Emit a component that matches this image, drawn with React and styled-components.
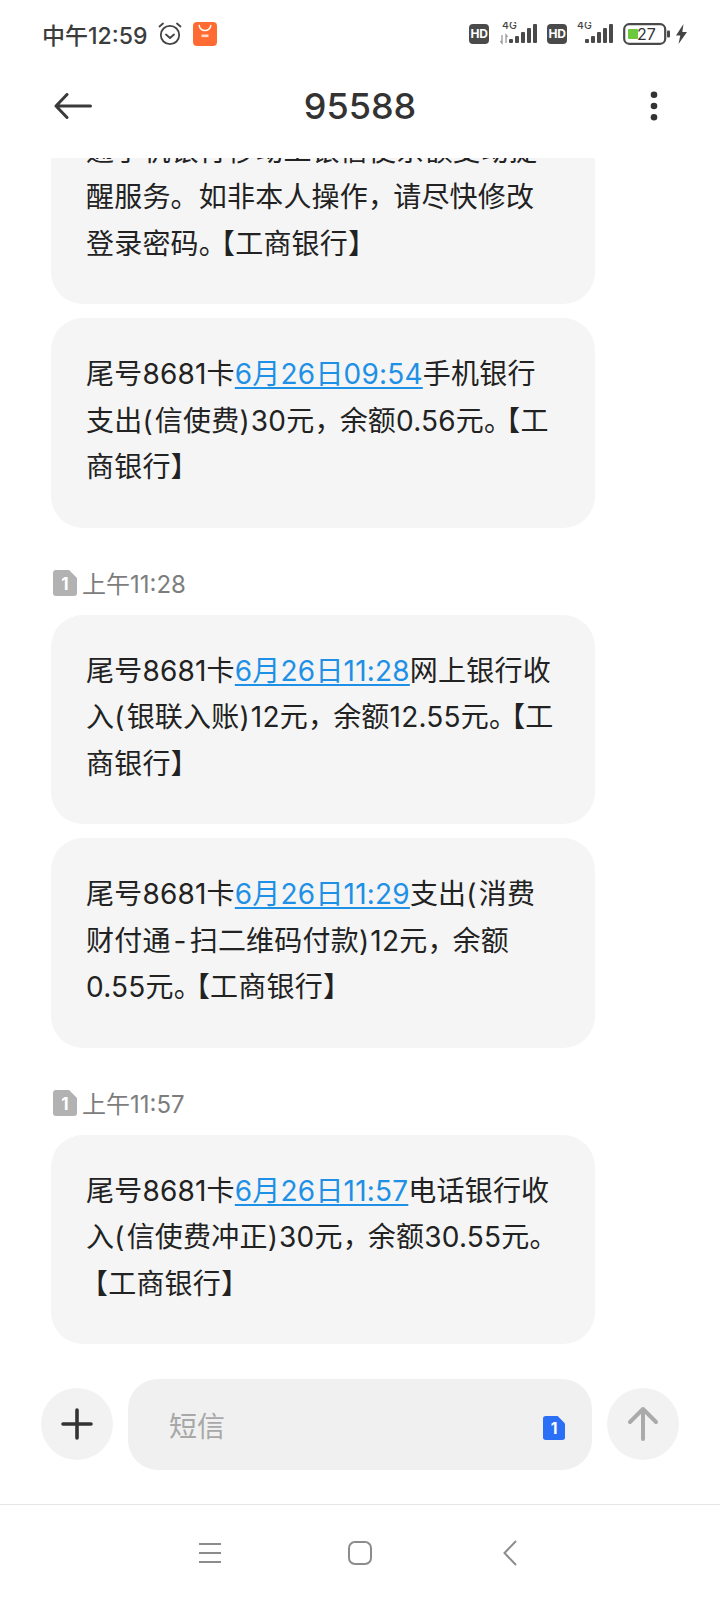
import React from 'react';
import styled, { createGlobalStyle } from 'styled-components';

const Global = createGlobalStyle`
  html, body { margin: 0; padding: 0; background: #fff; }
  * { box-sizing: border-box; }
`

const FONT = 'Inter, "Noto Sans CJK SC", "Noto Sans", sans-serif'

const Screen = styled.div`
  width: 720px;
  height: 1600px;
  display: flex;
  flex-direction: column;
  background: #fff;
  font-family: ${FONT};
  overflow: hidden;
`

const StatusBar = styled.div`
  height: 70px;
  flex: none;
  display: flex;
  align-items: center;
  justify-content: space-between;
  padding: 0 32px 2px 42px;
`

const StatusGroup = styled.div`
  display: flex;
  align-items: center;
  gap: ${p => p.$gap || 0}px;
`

const Clock = styled.span`
  font-size: 23px;
  font-weight: 500;
  color: #3c3c3c;
`

const HdBadge = styled.span`
  width: 20px;
  height: 20px;
  border-radius: 4px;
  background: #4a4a4a;
  color: #fff;
  font-size: 12px;
  font-weight: 700;
  line-height: 20px;
  text-align: center;
  letter-spacing: -0.3px;
`

const BoltSlot = styled.span`
  margin-left: -5px;
  line-height: 0;
`

const Header = styled.div`
  height: 88px;
  flex: none;
  display: grid;
  grid-template-columns: 1fr auto 1fr;
  align-items: center;
  padding: 0 54px 16px;
`

const Title = styled.div`
  font-size: 36px;
  font-weight: 500;
  color: #333;
`

const HeaderEnd = styled.div`
  justify-self: end;
  line-height: 0;
  margin-right: 8px;
`

const HeaderStart = styled.div`
  justify-self: start;
  line-height: 0;
`

const List = styled.div`
  flex: 1;
  min-height: 0;
  display: flex;
  flex-direction: column;
  justify-content: flex-end;
  overflow: hidden;
  padding: 0 0 35px 51px;
`

const Bubble = styled.div`
  flex: none;
  width: 544px;
  background: #f5f5f5;
  border-radius: 32px;
  padding: 33px 35px 37px;
  font-size: 28px;
  line-height: 46.5px;
  letter-spacing: 0.2px;
  color: #222;
  margin-top: 14px;
`

const DateLink = styled.a`
  color: #1e90e6;
  text-decoration: underline;
  text-underline-offset: 3px;
`

// punctuation in the phone's font sits wider or tighter than in ours
const Punct = styled.span`
  margin: ${p => p.$margin};
`

const Stamp = styled.div`
  flex: none;
  display: flex;
  align-items: center;
  gap: 5px;
  height: 30px;
  margin: 40px 0 3px 2px;
  font-size: 24px;
  color: #7d7d7d;
`

const Composer = styled.div`
  flex: none;
  height: 125px;
  display: flex;
  align-items: flex-start;
  padding: 0 41px;
`

const RoundButton = styled.div`
  width: 72px;
  height: 72px;
  margin-top: 9px;
  flex: none;
  border-radius: 50%;
  background: #f2f2f2;
  display: flex;
  align-items: center;
  justify-content: center;
`

const InputBox = styled.div`
  position: relative;
  width: 464px;
  height: 91px;
  margin: 0 15px;
  flex: none;
  border-radius: 30px;
  background: #f0f0f0;
  padding: 0 0 0 41px;
  display: flex;
  align-items: center;
  font-size: 28px;
  color: #a8a8a8;
`

const SimBadge = styled.span`
  position: absolute;
  right: 27px;
  top: 37px;
  line-height: 0;
`

const NavBar = styled.div`
  flex: none;
  height: 96px;
  border-top: 1px solid #e6e6e6;
  display: grid;
  grid-template-columns: repeat(3, 150px);
  justify-content: center;
  justify-items: center;
  align-items: center;
`

const PUNCT_MARGINS = {
  '(': '0 2px 0 0',
  ')': '0 1px 0 0',
  '-': '0 3px',
  '，': '0 -3px 0 0',
  '【': '0 0 0 -6px',
};

function Rich({ text }) {
  return text.split(/([()\-，【])/).map((part, i) =>
    PUNCT_MARGINS[part]
      ? <Punct key={i} $margin={PUNCT_MARGINS[part]}>{part}</Punct>
      : part
  );
}

function Alarm() {
  return (
    <svg width="24" height="24" viewBox="0 0 24 24" fill="none" stroke="#444" strokeWidth="1.8" strokeLinecap="round" strokeLinejoin="round">
      <circle cx="12" cy="13" r="9.2" />
      <path d="M8 12.500l4 3.500 4-3.500" />
      <path d="M1.500 4.500 5 1.500M22.500 4.500 19 1.500" />
    </svg>
  );
}

function MiStore() {
  return (
    <svg width="24" height="24" viewBox="0 0 24 24">
      <rect width="24" height="24" rx="4" fill="#ff6b33" />
      <path d="M6 3c.8 4 3.200 5.500 6 5.500s5.200-1.500 6-5.500" fill="none" stroke="#fff" strokeWidth="1.400" />
      <rect x="8.500" y="12.500" width="7" height="2.600" fill="#ffd9c8" />
    </svg>
  );
}

function Signal({ arrows }) {
  const bars = [[0, 4], [6, 7], [12, 11], [18, 15], [24, 19]];
  return (
    <svg width={arrows ? 38 : 36} height="24" viewBox={arrows ? '-10 0 38 24' : '-8 0 36 24'}>
      <text x={arrows ? -7 : -8} y="7" fontSize="10.500" fontFamily="Inter, sans-serif" fontWeight="500" fill="#444">4G</text>
      {bars.map(([x, h]) => (
        <rect key={x} x={x} y={21 - h} width="4" height={h} rx="1" fill="#4a4a4a" />
      ))}
      {arrows && <path d="M-7 13v8l-1.500-2M-3 21v-8l1.500 2" fill="none" stroke="#999" strokeWidth="1.300" />}
    </svg>
  );
}

function Battery() {
  return (
    <svg width="47" height="22" viewBox="0 0 47 22">
      <rect x="1.200" y="1.200" width="41" height="19.600" rx="5" fill="none" stroke="#4a4a4a" strokeWidth="2.200" />
      <rect x="5" y="6" width="10" height="10" rx="1" fill="#6cc83c" />
      <text x="14" y="17" fontSize="16" fontFamily="Inter, sans-serif" fill="#333">27</text>
      <rect x="44" y="7.500" width="3" height="7" rx="1" fill="#4a4a4a" />
    </svg>
  );
}

function Bolt() {
  return (
    <svg width="13" height="20" viewBox="0 0 13 20">
      <path d="M8.500 0 1 11.500h4.300L3.500 20 12 8H7.300z" fill="#444" />
    </svg>
  );
}

function BackArrow() {
  return (
    <svg width="38" height="26" viewBox="0 0 38 26" fill="none" stroke="#3a3a3a" strokeWidth="3" strokeLinecap="round" strokeLinejoin="round">
      <path d="M36.500 13H2M13 1.500 2 13l11 11.500" />
    </svg>
  );
}

function MoreDots() {
  return (
    <svg width="8" height="30" viewBox="0 0 8 30" fill="#333">
      <circle cx="4" cy="3.700" r="3.300" />
      <circle cx="4" cy="15" r="3.300" />
      <circle cx="4" cy="26.300" r="3.300" />
    </svg>
  );
}

function SimIcon({ width = 24, height = 26, color = '#b2b2b2' }) {
  return (
    <svg width={width} height={height} viewBox="0 0 24 26">
      <path d="M3 0h13l8 8v15a3 3 0 0 1-3 3H3a3 3 0 0 1-3-3V3a3 3 0 0 1 3-3z" fill={color} />
      <text x="12" y="20" textAnchor="middle" fontSize="17" fontWeight="700" fontFamily="Inter, sans-serif" fill="#fff">1</text>
    </svg>
  );
}

function Plus() {
  return (
    <svg width="32" height="32" viewBox="0 0 32 32" fill="none" stroke="#333" strokeWidth="3.600" strokeLinecap="round">
      <path d="M16 2v28M2 16h28" />
    </svg>
  );
}

function SendArrow() {
  return (
    <svg width="32" height="36" viewBox="0 0 32 36" fill="none" stroke="#aaa" strokeWidth="4" strokeLinecap="round" strokeLinejoin="round">
      <path d="M16 33V3M3 16 16 3l13 13" />
    </svg>
  );
}

function NavMenu() {
  return (
    <svg width="22" height="22" viewBox="0 0 22 22" stroke="#8c8c8c" strokeWidth="1.800">
      <path d="M0 2h22M0 11h22M0 20h22" />
    </svg>
  );
}

function NavHome() {
  return (
    <svg width="24" height="24" viewBox="0 0 24 24" fill="none" stroke="#8c8c8c" strokeWidth="2">
      <rect x="1" y="1" width="22" height="22" rx="6" />
    </svg>
  );
}

function NavBack() {
  return (
    <svg width="14" height="26" viewBox="0 0 14 26" fill="none" stroke="#8c8c8c" strokeWidth="2">
      <path d="M13 1 1.500 13 13 25" />
    </svg>
  );
}

function Message({ before, date, after }) {
  return (
    <Bubble>
      {before && <Rich text={before} />}
      {date && <DateLink>{date}</DateLink>}
      <Rich text={after} />
    </Bubble>
  );
}

function TimeStamp({ children }) {
  return (
    <Stamp>
      <SimIcon />
      {children}
    </Stamp>
  );
}

export default function App() {
  return (
    <Screen>
      <Global />
      <StatusBar>
        <StatusGroup $gap={11}>
          <Clock>中午12:59</Clock>
          <Alarm />
          <MiStore />
        </StatusGroup>
        <StatusGroup $gap={10}>
          <HdBadge>HD</HdBadge>
          <Signal arrows />
          <HdBadge>HD</HdBadge>
          <Signal />
          <Battery />
          <BoltSlot><Bolt /></BoltSlot>
        </StatusGroup>
      </StatusBar>
      <Header>
        <HeaderStart><BackArrow /></HeaderStart>
        <Title>95588</Title>
        <HeaderEnd><MoreDots /></HeaderEnd>
      </Header>
      <List>
        <Message after="通手机银行移动工银信使余额变动提醒服务。如非本人操作，请尽快修改登录密码。【工商银行】" />
        <Message before="尾号8681卡" date="6月26日09:54" after="手机银行支出(信使费)30元，余额0.56元。【工商银行】" />
        <TimeStamp>上午11:28</TimeStamp>
        <Message before="尾号8681卡" date="6月26日11:28" after="网上银行收入(银联入账)12元，余额12.55元。【工商银行】" />
        <Message before="尾号8681卡" date="6月26日11:29" after="支出(消费财付通-扫二维码付款)12元，余额0.55元。【工商银行】" />
        <TimeStamp>上午11:57</TimeStamp>
        <Message before="尾号8681卡" date="6月26日11:57" after="电话银行收入(信使费冲正)30元，余额30.55元。【工商银行】" />
      </List>
      <Composer>
        <RoundButton><Plus /></RoundButton>
        <InputBox>
          短信
          <SimBadge><SimIcon width={22} height={24} color="#2a6ff5" /></SimBadge>
        </InputBox>
        <RoundButton><SendArrow /></RoundButton>
      </Composer>
      <NavBar>
        <NavMenu />
        <NavHome />
        <NavBack />
      </NavBar>
    </Screen>
  );
}
